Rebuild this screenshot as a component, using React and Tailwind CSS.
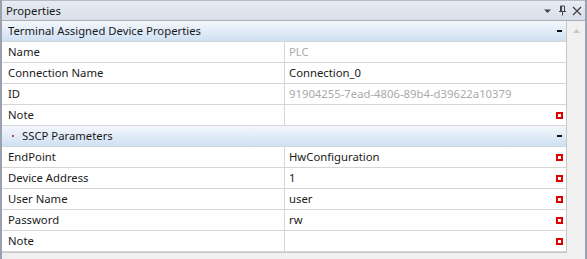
import React from "react";

const Sq = () => (
  <span className="w-[7px] h-[7px] border-2 border-[#e00000] box-border shrink-0 mr-[-1px]" />
);

const Row = ({ label, value, muted, sq }) => (
  <div className="flex h-[21px] border-b border-[#d6d6d6] bg-white">
    <div className="w-[283px] pl-[6px] flex items-center border-r border-[#d6d6d6] text-[#1a1a1a] whitespace-nowrap">
      {label}
    </div>
    <div className="flex-1 flex items-center pl-[4px] pr-[4px] justify-between">
      <span className={muted ? "text-[#aaaaaa]" : "text-[#1a1a1a]"}>{value}</span>
      {sq && <Sq />}
    </div>
  </div>
);

const Header = ({ children, dot }) => (
  <div className="flex h-[21px] border-b border-[#d6d6d6] bg-gradient-to-b from-[#f4f7fb] to-[#cfe0f4] items-center pl-[6px] pr-[4px]">
    {dot && <span className="w-[2px] h-[2px] bg-[#b05050] ml-[4px] mr-[8px]" />}
    <span className="flex-1 text-[#1a1a1a] whitespace-nowrap">{children}</span>
    <span className="w-[5px] h-[2px] bg-[#111]" />
  </div>
);

export default function App() {
  return (
    <div
      className="w-[587px] h-[259px] bg-[#f0f0f0] flex flex-col border-l-2 border-r-2 border-[#9aa2b0] text-[11.3px] leading-none overflow-hidden"
      style={{ fontFamily: "'Segoe UI', 'Noto Sans', sans-serif" }}
    >
      <div className="h-[21px] shrink-0 flex items-center pl-[4px] pr-[3px] bg-gradient-to-b from-[#e8ecf2] to-[#d8dfe9] border-b border-[#a6aebb] border-t border-t-[#b4bcc8]">
        <span className="flex-1 text-[#1a1a1a]">Properties</span>
        <svg width="9" height="6" viewBox="0 0 9 6" className="mr-[6px]">
          <path d="M1 1.5 L8 1.5 L4.5 5 Z" fill="#444" />
        </svg>
        <svg width="9" height="11" viewBox="0 0 9 11" className="mr-[5px]">
          <path d="M2.5 1 H6.5 V6.5 H2.5 Z M3.5 1 V6 M1 6.5 H8 M4.5 6.5 V10.5" stroke="#444" strokeWidth="1" fill="none" />
        </svg>
        <svg width="10" height="10" viewBox="0 0 10 10">
          <path d="M1 1 L9 9 M9 1 L1 9" stroke="#444" strokeWidth="1.3" />
        </svg>
      </div>
      <div className="flex flex-1 min-h-0">
        <div className="w-[565px] flex flex-col">
          <div className="border-r border-b border-[#c8c8c8] flex flex-col">
            <Header>Terminal Assigned Device Properties</Header>
            <Row label="Name" value="PLC" muted />
            <Row label="Connection Name" value="Connection_0" />
            <Row label="ID" value="91904255-7ead-4806-89b4-d39622a10379" muted />
            <Row label="Note" value="" sq />
            <Header dot>SSCP Parameters</Header>
            <Row label="EndPoint" value="HwConfiguration" sq />
            <Row label="Device Address" value="1" sq />
            <Row label="User Name" value="user" sq />
            <Row label="Password" value="rw" sq />
            <Row label="Note" value="" sq />
          </div>
        </div>
        <div className="w-[18px] flex flex-col items-center pt-[8px]">
          <svg width="7" height="4" viewBox="0 0 7 4">
            <path d="M0 4 L3.5 0 L7 4 Z" fill="#c8c8c8" />
          </svg>
        </div>
      </div>
    </div>
  );
}
